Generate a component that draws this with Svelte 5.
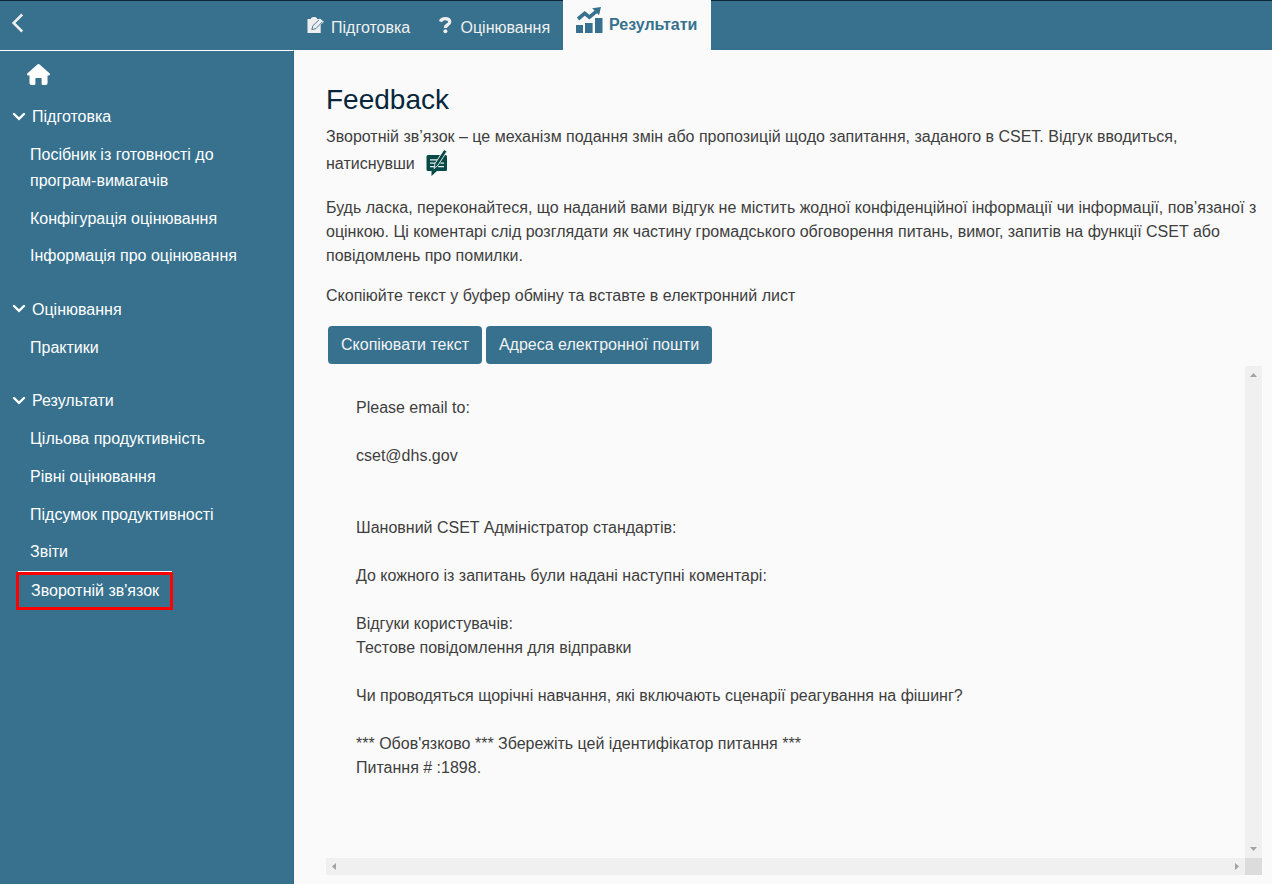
<script>
  const groups = [
    { title: 'Підготовка', items: ['Посібник із готовності до\nпрограм-вимагачів', 'Конфігурація оцінювання', 'Інформація про оцінювання'] },
    { title: 'Оцінювання', items: ['Практики'] },
    { title: 'Результати', items: ['Цільова продуктивність', 'Рівні оцінювання', 'Підсумок продуктивності', 'Звіти', "Зворотній зв'язок"] }
  ];
  const active = "Зворотній зв'язок";
  const message = `Please email to:

cset@dhs.gov


Шановний CSET Адміністратор стандартів:

До кожного із запитань були надані наступні коментарі:

Відгуки користувачів:
Тестове повідомлення для відправки

Чи проводяться щорічні навчання, які включають сценарії реагування на фішинг?

*** Обов'язково *** Збережіть цей ідентифікатор питання ***
Питання # :1898.`;
</script>

<div class="page">
  <header>
    <div class="back">
      <svg width="13" height="20" viewBox="0 0 13 20"><path d="M11.2 1.5 2.6 10l8.6 8.5" fill="none" stroke="#f0eeee" stroke-width="2.5" /></svg>
    </div>
    <nav class="tabs">
      <div class="tab prep">
        <svg width="18" height="18" viewBox="0 0 18 18">
          <path d="M.5 2H4V1l2-1h2l2 1v1h3.700v14H.5z" fill="#eee" />
          <path d="m4.600 12.900 1.100-4.400L12.700 1.600 17 4.800 9 12z" fill="#eee" />
          <path d="m4.800 12.600 1.200-4 6-5.800M4.800 12.600l4-.9 6.700-6.900" fill="none" stroke="#37718e" stroke-width=".9" />
        </svg>
        <span>Підготовка</span>
      </div>
      <div class="tab assess">
        <svg width="13" height="17" viewBox="0 0 13 17">
          <path d="M1.400 4.600C2.200 2.600 3.900 1.700 6.100 1.700c2.700 0 4.600 1.200 4.600 3.300 0 2.800-4.200 3-4.200 5.400v.5" fill="none" stroke="#eee" stroke-width="3.3" />
          <circle cx="6.4" cy="14.3" r="2" fill="#eee" />
        </svg>
        <span>Оцінювання</span>
      </div>
      <div class="tab results">
        <svg width="28" height="28" viewBox="0 0 28 28">
          <path d="M1 19h7v8H1zm9-2h7.600v10H10zm10-5h7.500v15H20z" fill="#37718e" />
          <path d="m3 13 6.700-5.600 4.700 3.700 7.300-6" fill="none" stroke="#37718e" stroke-width="3.6" />
          <path d="M17.200 2.200 26 1l-2 8.200z" fill="#37718e" />
        </svg>
        <span>Результати</span>
      </div>
    </nav>
  </header>
  <div class="body">
    <aside>
      <svg class="home" width="23" height="21" viewBox="0 0 23 21">
        <path d="M11.500 0c.5 0 .8.2 1.100.5l9.900 8.800c1 .9.4 2.200-.9 2.200h-1.100l.1 7.500c0 1.200-.8 2-2 2h-2.500c-1 0-1.500-.5-1.500-1.500V15c0-.7-.3-1-1-1H9.400c-.7 0-1 .3-1 1v4.500c0 1-.5 1.500-1.500 1.500H4.500c-1.300 0-2-.8-2-2v-7.500H1.300C0 11.500-.5 10.200.5 9.300L10.400.5c.3-.3.6-.5 1.100-.5z" fill="#fff" />
      </svg>
      {#each groups as group}
        <section>
          <div class="group">
            <svg width="14" height="10" viewBox="0 0 14 10"><path d="m2 2 5 4.800L12 2" fill="none" stroke="#fff" stroke-width="2.4" stroke-linecap="round" /></svg>
            <span>{group.title}</span>
          </div>
          {#each group.items as item}
            <div class="item" class:active={item === active}><span>{item}</span></div>
          {/each}
        </section>
      {/each}
    </aside>
    <main>
      <h1>Feedback</h1>
      <p class="intro">Зворотній зв’язок – це механізм подання змін або пропозицій щодо запитання, заданого в CSET. Відгук вводиться,<br /><span class="with-icon">натиснувши
        <svg width="22" height="28" viewBox="0 0 22 28">
          <path d="M2 6h17.500q1.500 0 1.500 1.500v13q0 1.500-1.500 1.500H11l-5.500 5v-5H2Q.5 22 .5 20.500v-13Q.5 6 2 6z" fill="#064a48" />
          <path d="M4 10.800h7.500M4 14.200h5.500M4 17.600h4M14.500 14.200h3.500M12 17.600h6" stroke="#e6eeee" stroke-width="1.3" />
          <path d="m8 19.500 1-5L18 .5l3 1.800-9 13.900z" fill="#064a48" stroke="#fafafa" stroke-width=".9" />
        </svg></span></p>
      <p class="notice">Будь ласка, переконайтеся, що наданий вами відгук не містить жодної конфіденційної інформації чи інформації, пов’язаної з<br />оцінкою. Ці коментарі слід розглядати як частину громадського обговорення питань, вимог, запитів на функції CSET або<br />повідомлень про помилки.</p>
      <p class="copy">Скопіюйте текст у буфер обміну та вставте в електронний лист</p>
      <div class="buttons">
        <button class="b1">Скопіювати текст</button>
        <button class="b2">Адреса електронної пошти</button>
      </div>
      <div class="viewer">
        <pre>{message}</pre>
        <div class="vbar">
          <svg width="7" height="4" viewBox="0 0 7 4"><path d="m0 4 3.500-4L7 4z" /></svg>
          <svg width="7" height="4" viewBox="0 0 7 4"><path d="m0 0 3.500 4L7 0z" /></svg>
        </div>
        <div class="hbar">
          <svg width="4" height="7" viewBox="0 0 4 7"><path d="M4 0 0 3.500 4 7z" /></svg>
          <svg width="4" height="7" viewBox="0 0 4 7"><path d="m0 0 4 3.500L0 7z" /></svg>
        </div>
        <div class="corner"></div>
      </div>
    </main>
  </div>
</div>

<style>
  :global(body) { margin: 0; }
  * { box-sizing: border-box; }
  svg { display: block; flex: none; }
  .page { width: 1272px; height: 884px; overflow: hidden; background: #fafafa; color: #3e3e3e; font: 16px/24px "Liberation Sans", Arial, sans-serif; white-space: nowrap; display: flex; flex-direction: column; }
  header { height: 50px; flex: none; display: flex; background: #37718e; box-shadow: inset 0 1px #0b2638; }
  .back { width: 294px; padding: 13px 0 0 11px; }
  .tabs { display: flex; color: #f0f0f0; }
  .tab { display: flex; height: 50px; }
  .prep { width: 145px; padding: 16px 0 0 13px; gap: 6px; }
  .assess { width: 124px; padding: 16px 0 0; gap: 8.5px; }
  .prep svg, .assess svg { margin-top: 1px; }
  .results { width: 148px; background: #fafafa; color: #37718e; font-weight: 700; padding: 6px 0 0 12px; gap: 6px; }
  .results span { margin-top: 7px; }
  .body { flex: 1; display: flex; }
  aside { width: 294px; background: #37718e; color: #fff; border-top: 1px solid #fff; border-right: 1px solid #316780; padding-top: 13px; }
  .home { margin-left: 27px; margin-bottom: 20px; }
  section { margin-bottom: 22.7px; }
  .group { height: 24px; display: flex; align-items: center; gap: 6px; padding-left: 12px; margin-bottom: 7px; }
  .group svg { margin-bottom: 1px; }
  .item { padding: 6px 0 6px 30px; line-height: 26px; white-space: pre; margin-bottom: -.3px; }
  .item.active { padding: .6px 0 0 16px; }
  .active span { display: block; position: relative; width: 157px; height: 38px; border: 3px solid red; padding-left: 12px; line-height: 32px; }
  .active span::before { content: ""; position: absolute; left: -1px; right: -2px; top: -4px; height: 1px; background: #fff; }
  main { flex: 1; padding: 33px 10px 9px 32px; min-width: 0; display: flex; flex-direction: column; }
  h1 { margin: 0 0 8px; font-size: 28px; line-height: 34px; font-weight: 400; color: #07263b; }
  p { margin: 0; }
  .intro { margin-bottom: 19px; }
  .with-icon { display: flex; gap: 11px; height: 28px; line-height: 30px; }
  .notice { margin-bottom: 16px; }
  .copy { margin-bottom: 18px; }
  .buttons { display: flex; gap: 4px; padding-left: 2px; margin-bottom: 2px; }
  button { height: 38px; border: 0; border-radius: 4px; padding: 0; background: #37718e; color: #f3f3f3; font: inherit; }
  .b1 { width: 154px; }
  .b2 { width: 226px; }
  .viewer { flex: 1; display: grid; grid-template-columns: 1fr 17px; grid-template-rows: 1fr 17px; }
  pre { margin: 0; padding: 30px 0 0 30px; font: inherit; }
  .vbar, .hbar { background: #f0f0f0; fill: #a3a3a3; display: flex; align-items: center; justify-content: space-between; }
  .vbar { flex-direction: column; padding: 7px 0; }
  .hbar { padding: 0 6px; }
  .corner { background: #dcdcdc; }
</style>
